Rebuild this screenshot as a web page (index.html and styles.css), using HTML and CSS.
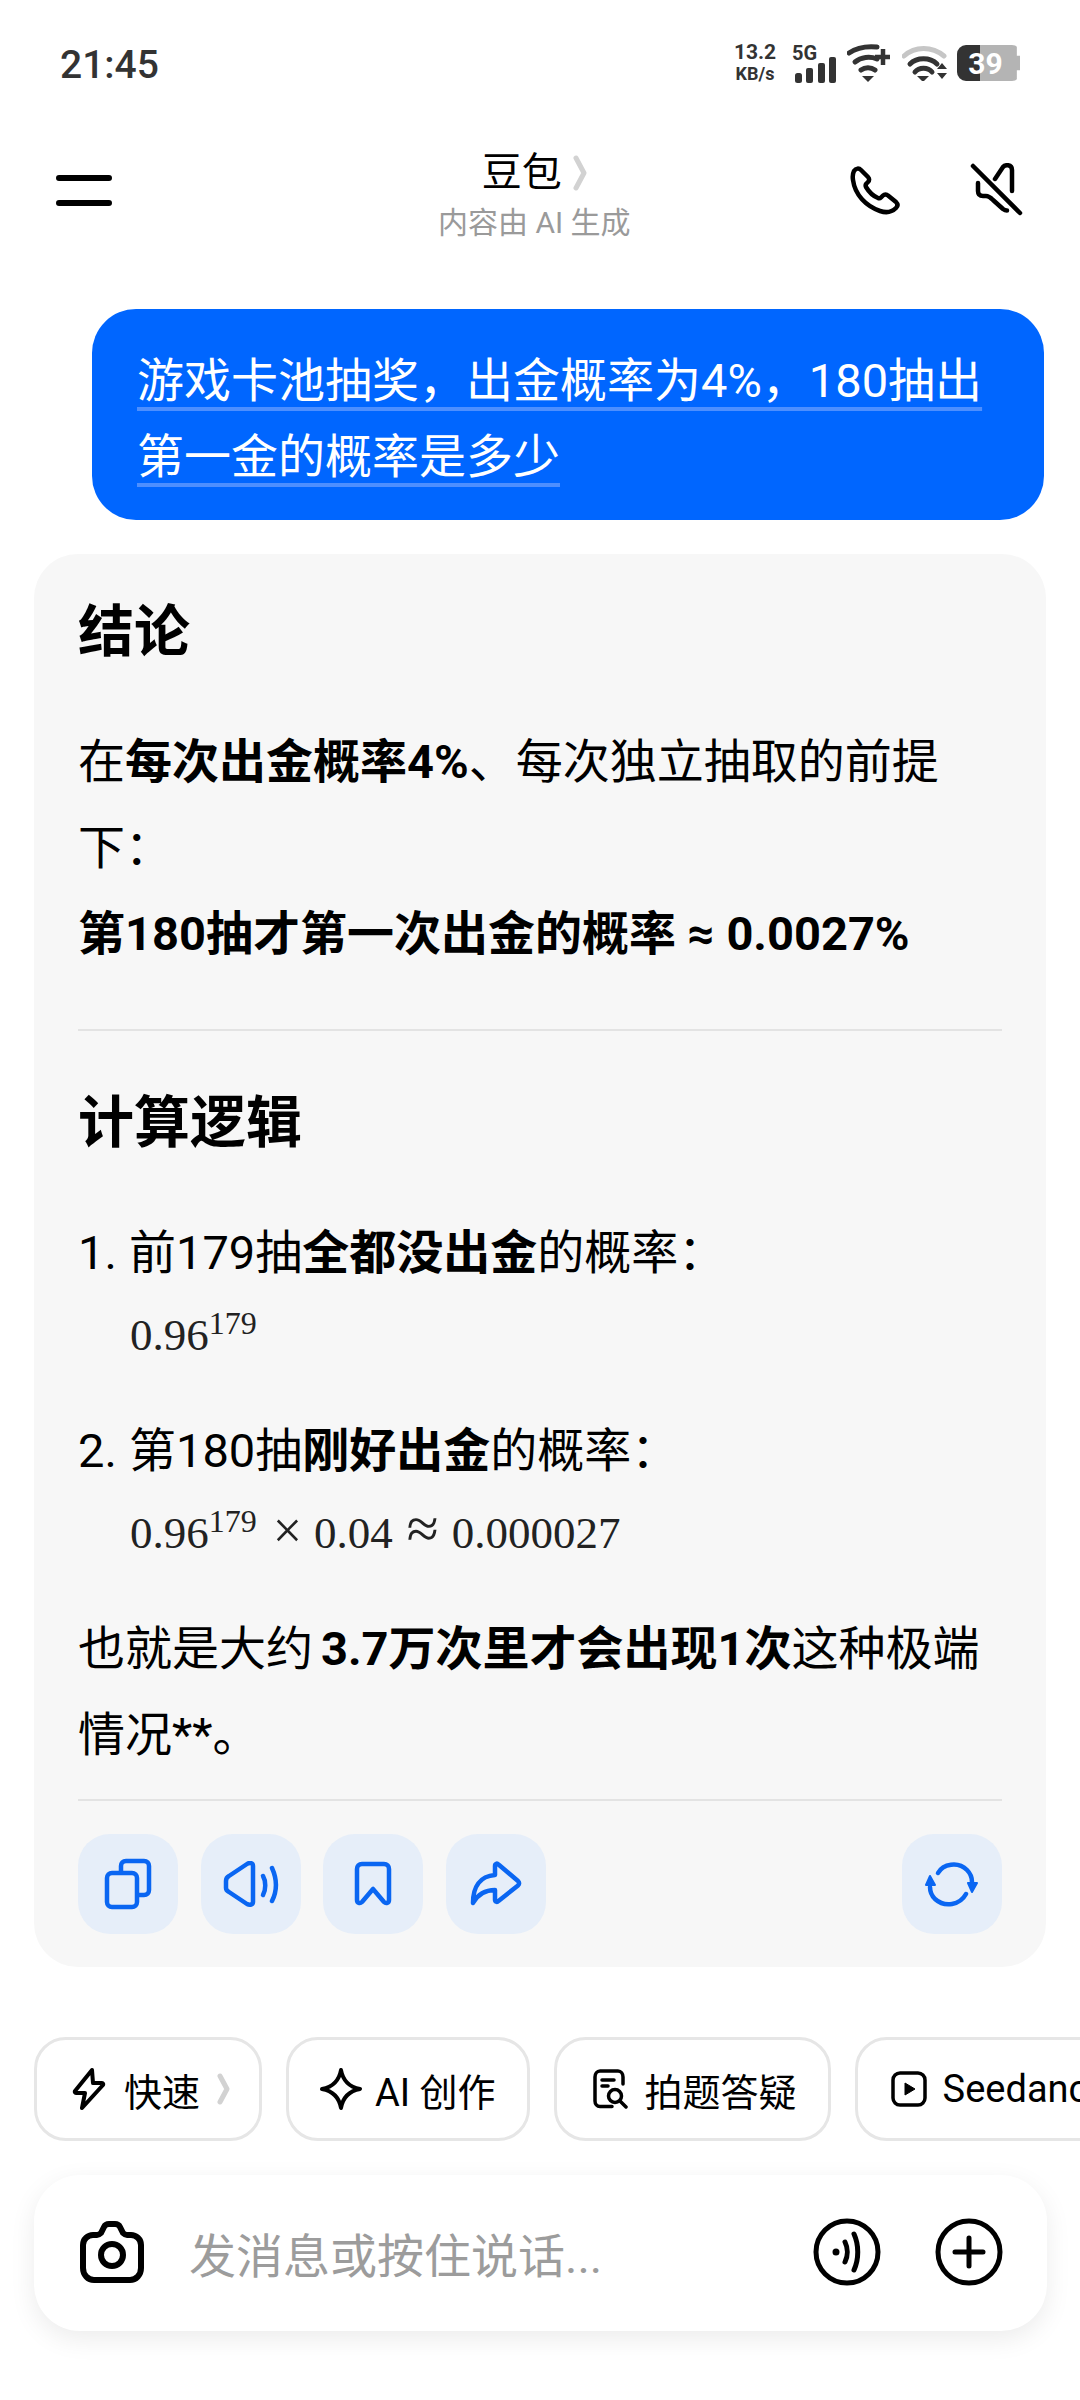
FILE: index.html
```html
<!DOCTYPE html>
<html lang="zh-CN">
<head>
<meta charset="utf-8">
<title>豆包</title>
<link rel="stylesheet" href="styles.css">
</head>
<body>
<div class="page">
  <div class="status">
    <span class="time">21:45</span>
    <div class="status-right">
      <div class="speed"><span>13.2</span><span class="unit">KB/s</span></div>
      <div class="net">
        <span class="net-label">5G</span>
        <svg class="bars" width="41" height="26" viewBox="0 0 41 26"><rect x="0" y="16" width="7" height="10" rx="2.5"/><rect x="11" y="11" width="7" height="15" rx="2"/><rect x="23" y="6" width="7" height="20" rx="2"/><rect x="34" y="0" width="7" height="26" rx="2"/></svg>
      </div>
      <svg class="wifi-a" width="44" height="38" viewBox="0 0 44 38" fill="none" stroke="#333" stroke-width="5" stroke-linecap="round"><path d="M2 9C10 3.500 20 2 30 3"/><path d="M8 18C14 13 23 12 30 15"/><path d="M14 26C18 23 24 23 28 26"/><path d="M15 32h12l-6 6z" fill="#333" stroke="none"/><path d="M36 5v16M28 13h15" stroke-width="4.500" stroke-linecap="butt"/></svg>
      <svg class="wifi-b" width="46" height="36" viewBox="0 0 46 36" fill="none" stroke="#333" stroke-width="5" stroke-linecap="round"><path d="M2 11C13 1 30 1 42 11" stroke="#c6c6c6"/><path d="M8 19C15 12 28 12 35 19"/><path d="M13 27C17 22 26 22 30 27"/><path d="M15 31h12l-6 6z" fill="#333" stroke="none"/><path d="M35 24l5-6 5 6zM35 28h10l-5 6z" fill="#333" stroke="none"/></svg>
      <div class="battery"><span>39</span></div>
    </div>
  </div>

  <header class="topbar">
    <svg class="menu" width="56" height="32" viewBox="0 0 56 32" fill="none" stroke="#000" stroke-width="6" stroke-linecap="round"><path d="M3 3h50M3 28h50"/></svg>
    <div class="title">
      <div class="title-main"><span>豆包</span>
        <svg width="14" height="36" viewBox="0 0 14 36" fill="none" stroke="#d2d2d2" stroke-width="5" stroke-linecap="round" stroke-linejoin="round"><path d="M3 3l8 15-8 15"/></svg>
      </div>
      <div class="title-sub">内容由 AI 生成</div>
    </div>
    <div class="top-actions">
      <svg width="52" height="50" viewBox="0 0 52 50" fill="none" stroke="#000" stroke-width="4.500" stroke-linecap="round" stroke-linejoin="round"><path d="M4 6C6 3 9 3 11 5L18 12C19.500 13.500 19.500 15.500 18 17L16 19C15.500 20 15.500 21 16 22C19 27 23 31 28 33C29 33.500 30 33.500 31 32.500L33 30.500C34.500 29 36.500 29 38 30.500L46 37C48 39 48 41 46 43C42 47 36 48 30 46C16 41 5 30 3 15C2.500 12 3 8 4 6Z"/></svg>
      <svg width="54" height="54" viewBox="0 0 54 54" fill="none" stroke="#000" stroke-width="4.500" stroke-linecap="round" stroke-linejoin="round"><path d="M3 3L50 50"/><path d="M25 16L33 4C35 1.500 42 1 42 7V28"/><path d="M8 20V28C8 32 10 33 13 33H16C19 33 21 35 23 37L33 46C35 47.500 36 47.500 37 47.500"/></svg>
    </div>
  </header>

  <div class="bubble">
    <span class="bubble-text">游戏卡池抽奖，出金概率为4%，180抽出第一金的概率是多少</span>
  </div>

  <article class="card">
    <h2 class="head">结论</h2>
    <p class="para para-first">在<b>每次出金概率4%</b>、每次独立抽取的前提下：<br><b>第180抽才第一次出金的概率 ≈ 0.0027%</b></p>
    <hr class="rule rule-mid">
    <h2 class="head">计算逻辑</h2>
    <div class="step step-first"><span class="num">1.</span><span>前179抽<b>全都没出金</b>的概率：</span></div>
    <div class="math">0.96<sup>179</sup></div>
    <div class="step"><span class="num">2.</span><span>第180抽<b>刚好出金</b>的概率：</span></div>
    <div class="math">0.96<sup>179</sup><span class="op op-times">×</span>0.04<span class="op op-approx">≈</span>0.000027</div>
    <p class="para para-last">也就是大约<b class="lead">3.7万次里才会出现1次</b>这种极端情况**。</p>
    <hr class="rule rule-end">
    <div class="actions">
      <button class="act"><svg width="48" height="52" viewBox="0 0 48 52" fill="none" stroke="#0a66f2" stroke-width="4.500" stroke-linecap="round" stroke-linejoin="round"><rect x="3" y="15" width="30" height="34" rx="5"/><path d="M17 14V8c0-3 2-5 5-5h18c3 0 5 2 5 5v24c0 3-2 5-5 5h-6"/></svg></button>
      <button class="act"><svg width="56" height="46" viewBox="0 0 56 46" fill="none" stroke="#0a66f2" stroke-width="4.500" stroke-linecap="round" stroke-linejoin="round"><path d="M3 20v7c0 2 1 3 3 4L24 43c3 1.500 6 .5 6-2V5c0-3-3-4-6-2L6 15c-2 1-3 2-3 5z"/><path d="M40 15C43 20 43 29 40 34"/><path d="M49 7C54 18 54 30 49 40"/></svg></button>
      <button class="act"><svg width="38" height="46" viewBox="0 0 38 46" fill="none" stroke="#0a66f2" stroke-width="4.500" stroke-linecap="round" stroke-linejoin="round"><path d="M3 8c0-3 2-5 5-5h22c3 0 5 2 5 5v31c0 3-3 4-5 2L19 28 8 41c-2 2-5 1-5-2z"/></svg></button>
      <button class="act"><svg width="52" height="46" viewBox="0 0 52 46" fill="none" stroke="#0a66f2" stroke-width="4.500" stroke-linecap="round" stroke-linejoin="round"><path d="M25 5c0-2.500 2-3 3.500-1.500L48 20c1.500 1.500 1.500 3 0 4.500L28.500 40c-1.500 1.500-3.500 1-3.500-1.500V29C15 29 8 33 3 42 3 26 10 15 25 14z"/></svg></button>
      <button class="act act-end"><svg width="54" height="46" viewBox="0 0 54 46" fill="none" stroke="#0a66f2" stroke-width="4.500" stroke-linecap="round" stroke-linejoin="round"><path d="M13 12C18 3 33 0 42 9c3 3 5 7 5 12"/><path d="M41 33c-6 11-21 14-31 5-3-3-5-7-5-12"/><path d="M1 24l4-9 5 9z" fill="#0a66f2" stroke-width="2"/><path d="M43 22h9l-5 9z" fill="#0a66f2" stroke-width="2"/></svg></button>
    </div>
  </article>

  <nav class="chips">
    <div class="chip chip-fast"><svg width="34" height="42" viewBox="0 0 34 42" fill="none" stroke="#000" stroke-width="4" stroke-linecap="round" stroke-linejoin="round"><path d="M20 2L3 23c-.5 1 0 2 1 2h9L10 40 31 17c.5-1 0-2-1-2h-9z"/></svg><span>快速</span>
      <svg class="chev" width="13" height="32" viewBox="0 0 13 32" fill="none" stroke="#d2d2d2" stroke-width="5" stroke-linecap="round" stroke-linejoin="round"><path d="M3 3l7 13-7 13"/></svg></div>
    <div class="chip chip-ai"><svg width="42" height="42" viewBox="0 0 42 42" fill="none" stroke="#000" stroke-width="4" stroke-linejoin="round"><path d="M21 2c2 11 8 17 19 19-11 2-17 8-19 19-2-11-8-17-19-19 11-2 17-8 19-19z"/></svg><span>AI 创作</span></div>
    <div class="chip chip-photo"><svg width="36" height="40" viewBox="0 0 36 40" fill="none" stroke="#000" stroke-width="3.500" stroke-linecap="round" stroke-linejoin="round"><path d="M20 37.500H8C5 37.500 3 35 3 32V8C3 5 5 2 8 2H26C29 2 31 5 31 8V15"/><path d="M10 11H22M10 17H16"/><circle cx="23" cy="27" r="6.500"/><path d="M28 32L34 38"/></svg><span>拍题答疑</span></div>
    <div class="chip chip-video"><svg width="36" height="36" viewBox="0 0 36 36" fill="none" stroke="#000" stroke-width="3.500" stroke-linejoin="round"><rect x="2" y="2" width="32" height="32" rx="7"/><path d="M14 12l10 6-10 6z" fill="#000" stroke-width="1"/></svg><span>Seedance</span></div>
  </nav>

  <div class="composer">
    <svg class="cam" width="64" height="62" viewBox="0 0 64 62" fill="none" stroke="#000" stroke-width="6" stroke-linejoin="round"><path d="M21 12l3-6c1-2 3-3 5-3h6c2 0 4 1 5 3l3 6c1 1 2 2 4 2h4c5 0 10 4 10 10v23c0 7-5 12-11 12H14C8 59 3 54 3 47V24c0-6 5-10 10-10h4c2 0 3-1 4-2z"/><circle cx="32" cy="34" r="11"/></svg>
    <span class="placeholder">发消息或按住说话...</span>
    <svg class="round" width="68" height="68" viewBox="0 0 68 68" fill="none" stroke="#000" stroke-width="5" stroke-linecap="round"><circle cx="34" cy="34" r="31"/><circle cx="23" cy="34" r="2.500" fill="#000" stroke-width="2"/><path d="M32 24c3 6 3 14 0 20"/><path d="M41 16c5 11 5 25 0 36"/></svg>
    <svg class="round round-plus" width="68" height="68" viewBox="0 0 68 68" fill="none" stroke="#000" stroke-width="5" stroke-linecap="round"><circle cx="34" cy="34" r="31"/><path d="M34 20v28M20 34h28"/></svg>
  </div>
</div>
</body>
</html>
```

FILE: styles.css
```css
* { box-sizing: border-box; }
html, body { margin: 0; padding: 0; background: #fff; }
body { font-family: Roboto, "Noto Sans CJK SC", sans-serif; color: #000; }
.page { width: 1080px; height: 2400px; overflow: hidden; }

.status { height: 126px; padding: 0 60px; display: flex; align-items: center; justify-content: space-between; }
.time { margin-top: 3px; font-size: 39px; font-weight: 500; color: #333; }
.status-right { display: flex; align-items: center; color: #333; }
.speed { width: 42px; margin-right: 16px; display: flex; flex-direction: column; align-items: center; font-size: 21px; font-weight: 700; line-height: 21px; }
.speed .unit { font-size: 18px; }
.net { position: relative; width: 41px; height: 36px; margin-left: 3px; margin-bottom: -1px; }
.net-label { position: absolute; left: -3px; top: -3px; font-size: 20px; font-weight: 700; line-height: 20px; }
.bars { position: absolute; left: 0; bottom: -1px; fill: #333; }
.wifi-a { margin-left: 11px; }
.wifi-b { margin-left: 11px; }
.battery { width: 63px; height: 36px; margin-left: 9px; border-radius: 9px 8px 8px 9px; background: linear-gradient(90deg, #333 0 23px, #b4b4b4 23px); color: #fff; font-size: 30px; font-weight: 700; display: flex; align-items: center; justify-content: center; clip-path: polygon(0 0, 95% 0, 95% 30%, 100% 30%, 100% 70%, 95% 70%, 95% 100%, 0 100%); padding-right: 6px; }

.topbar { height: 128px; padding: 0 56px; display: grid; grid-template-columns: 382px auto 1fr; align-items: center; }
.menu { margin-top: 2px; }
.title { padding-top: 9px; display: flex; flex-direction: column; align-items: center; }
.title-main { display: flex; align-items: center; gap: 11px; font-size: 40px; line-height: 54px; }
.title-sub { margin-top: 3px; font-size: 30px; line-height: 40px; color: #9a9a9a; }
.top-actions { display: flex; justify-content: flex-end; align-items: center; gap: 68px; }

.bubble { margin: 55px 36px 0 92px; height: 211px; padding: 34px 30px 0 45px; border-radius: 44px; background: #0066ff; color: #fff; font-size: 47px; line-height: 76px; }
.bubble-text { text-decoration: underline; text-decoration-color: #4d8fff; text-decoration-thickness: 4px; text-underline-offset: 10px; }

.card { margin: 34px 34px 0; padding: 33px 44px; height: 1413px; border-radius: 44px; background: #f7f7f7; }
.head { margin: 0; height: 86px; font-size: 56px; line-height: 90px; font-weight: 700; }
.para { margin: 0; font-size: 47px; line-height: 86px; }
.para-first { margin-top: 46px; }
.para-last { margin-top: 34px; }
.lead { margin-left: 8px; }
.rule { margin: 0; border: 0; height: 2px; background: #e3e3e3; }
.rule-mid { margin: 52px 0 47px; }
.rule-end { margin-top: 21px; }
.step { display: flex; font-size: 47px; line-height: 86px; margin-top: 34px; }
.step-first { margin-top: 46px; }
.num { width: 51px; flex: none; }
.math { height: 78px; padding-left: 52px; font-family: "Liberation Serif", serif; font-size: 45px; line-height: 78px; color: #222; }
.math sup { font-size: 32px; line-height: 0; vertical-align: 16px; }
.op { margin: 0 12px; line-height: 0; font-weight: 400; }
.op-times { margin-left: 16px; font-size: 52px; }
.op-approx { margin: 0 13px 0 14px; font-size: 58px; }
.actions { display: flex; gap: 22.5px; margin-top: 33px; }
.act { width: 100px; height: 100px; padding: 0; border: 0; border-radius: 32px; background: #e6eef9; display: flex; align-items: center; justify-content: center; }
.act-end { margin-left: auto; }

.chips { display: flex; gap: 24px; margin: 70px 0 0 34px; width: max-content; }
.chip { height: 104px; padding: 0 31px 0 33px; display: flex; align-items: center; gap: 16px; border: 3px solid #e6e6e6; border-radius: 32px; font-size: 38px; background: #fff; white-space: nowrap; }
.chip-fast { padding: 0 29px 0 35px; gap: 18px; }
.chip-ai { padding: 0 31px; gap: 13px; }
.chip-photo { padding: 0 31px 0 35px; gap: 17px; }
.chev { margin-left: -1px; }

.composer { margin: 34px 33px 0 34px; height: 156px; padding: 0 44px 2px 46px; display: flex; align-items: center; border-radius: 46px; background: #fff; box-shadow: 0 8px 26px rgba(0, 0, 0, .08); }
.cam { flex: none; }
.placeholder { margin-left: 45px; flex: 1; font-size: 47px; color: #9c9c9c; }
.round { flex: none; }
.round-plus { margin-left: 54px; }
```
